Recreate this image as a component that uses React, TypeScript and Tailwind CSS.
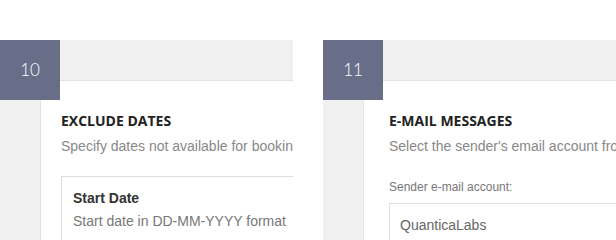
import React from 'react';

const Panel = ({
  num,
  children,
  pad,
}: {
  num: string;
  children: React.ReactNode;
  pad: string;
}) => (
  <div className="relative w-[293px] shrink-0 overflow-hidden">
    <div className="h-[41px] bg-[#f0f0f0] border-b border-[#e3e3e3]" />
    <div className="flex h-[159px]">
      <div className="w-[41px] shrink-0 bg-[#f0f0f0] border-r border-[#e3e3e3]" />
      <div className={`flex-1 min-w-0 bg-white ${pad} pt-[30px]`}>{children}</div>
    </div>
    <div className="absolute left-0 top-0 w-[60px] h-[60px] bg-[#686e88] flex items-center justify-center text-white text-[17px] font-light font-['Lato',sans-serif]">
      {num}
    </div>
  </div>
);

export default function App() {
  return (
    <div className="w-[616px] h-[240px] bg-white overflow-hidden pt-[40px] flex gap-[30px]">
      <Panel num="10" pad="pl-[20px]">
        <h3 className="font-['Open_Sans',sans-serif] font-bold text-[14px] leading-[20px] text-[#222] whitespace-nowrap">
          EXCLUDE DATES
        </h3>
        <p className="font-['Liberation_Sans',Arial,sans-serif] text-[14px] leading-[20px] text-[#888] whitespace-nowrap mt-[5px]">
          Specify dates not available for booking.
        </p>
        <div className="mt-[20px] border border-[#dddddd] border-r-0 pl-[11px] pt-[13px] h-[80px]">
          <div className="font-['Liberation_Sans',Arial,sans-serif] font-bold text-[14px] leading-[16px] text-[#333] whitespace-nowrap">
            Start Date
          </div>
          <div className="font-['Liberation_Sans',Arial,sans-serif] text-[14px] leading-[16px] text-[#777] whitespace-nowrap mt-[7px]">
            Start date in DD-MM-YYYY format
          </div>
        </div>
      </Panel>
      <Panel num="11" pad="pl-[25px]">
        <h3 className="font-['Open_Sans',sans-serif] font-bold text-[14px] leading-[20px] text-[#222] whitespace-nowrap">
          E-MAIL MESSAGES
        </h3>
        <p className="font-['Liberation_Sans',Arial,sans-serif] text-[14px] leading-[20px] text-[#888] whitespace-nowrap mt-[5px]">
          Select the sender's email account from which the messages will be sent.
        </p>
        <p className="font-['Liberation_Sans',Arial,sans-serif] text-[12px] leading-[16px] text-[#777] whitespace-nowrap mt-[23px]">
          Sender e-mail account:
        </p>
        <div className="mt-[8px] border border-[#dddddd] border-r-0 pl-[10px] pt-[13px] h-[60px] font-['Liberation_Sans',Arial,sans-serif] text-[14px] leading-[16px] text-[#666] whitespace-nowrap">
          QuanticaLabs
        </div>
      </Panel>
    </div>
  );
}
